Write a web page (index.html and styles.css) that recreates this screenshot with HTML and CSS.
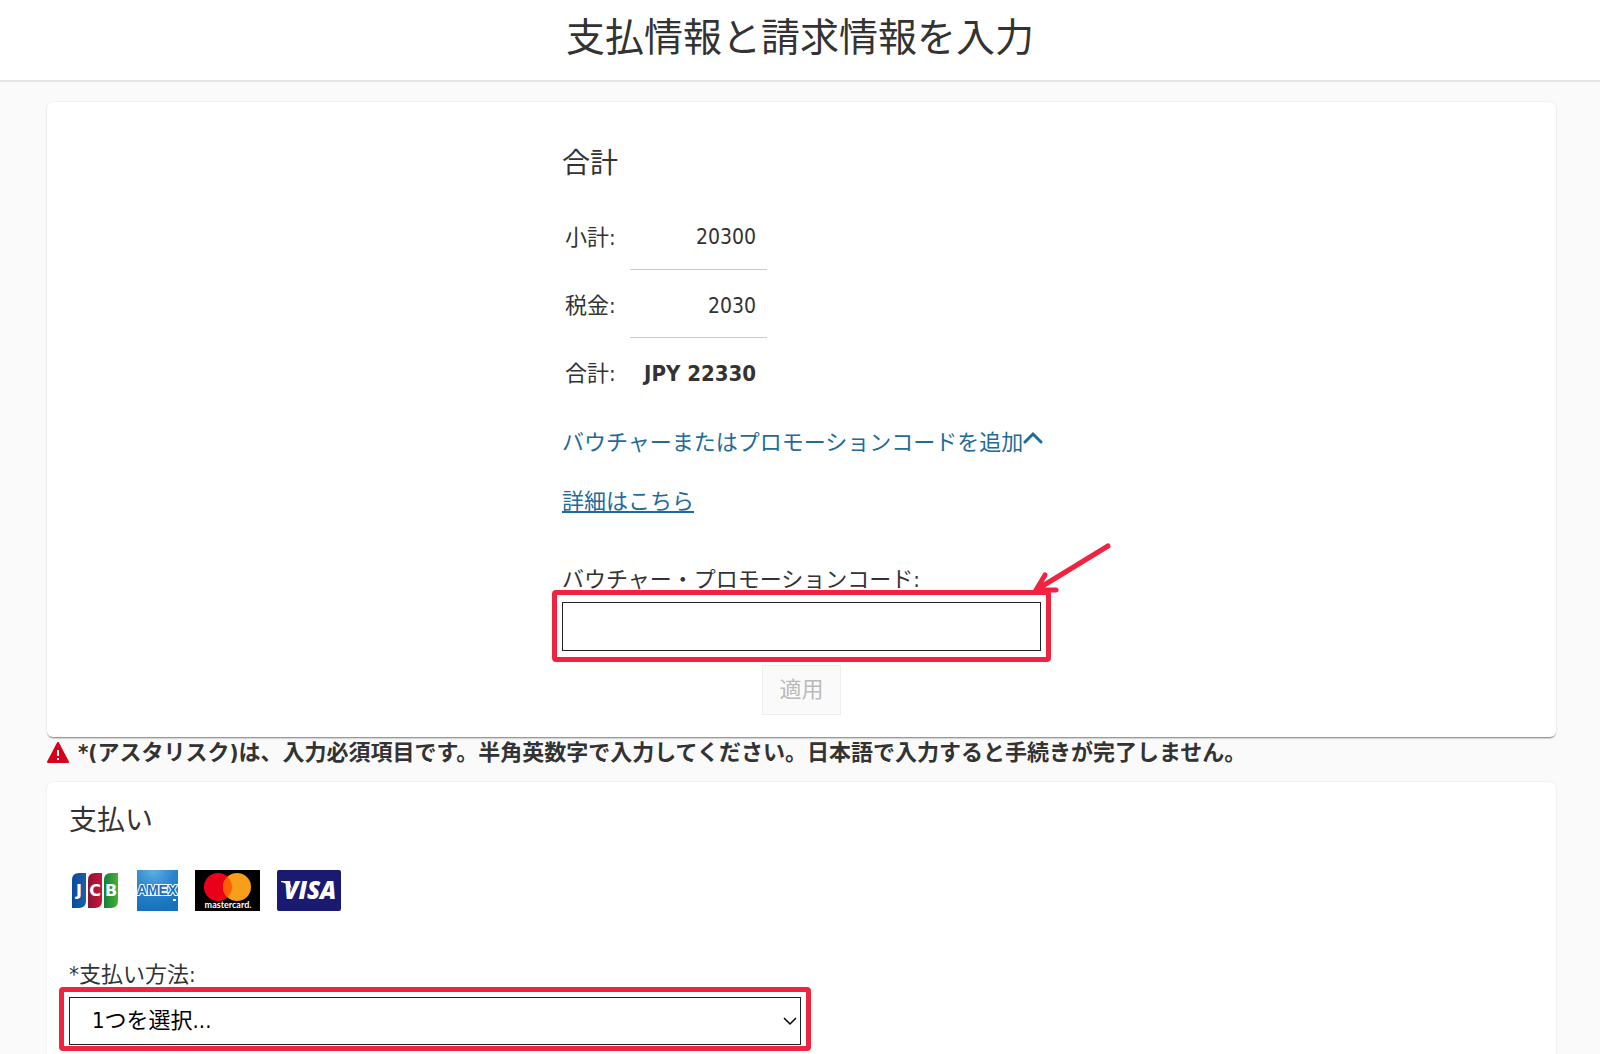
FILE: index.html
```html
<!DOCTYPE html>
<html lang="ja">
<head>
<meta charset="utf-8">
<title>支払情報と請求情報を入力</title>
<link rel="stylesheet" href="styles.css">
</head>
<body>
	<header id="page_header">
		<h1>支払情報と請求情報を入力</h1>
	</header>
	<main>
		<section class="card" id="summary">
			<div class="column">
				<h2>合計</h2>
				<table class="totals">
					<tr><th scope="row">小計:</th><td>20300</td></tr>
					<tr><th scope="row">税金:</th><td>2030</td></tr>
					<tr class="grand"><th scope="row">合計:</th><td>JPY 22330</td></tr>
				</table>
				<a class="toggle" href="#voucher">バウチャーまたはプロモーションコードを追加<svg width="20" height="13" viewBox="0 0 20 13"><path d="M2 11L10 3L18 11" fill="none" stroke="#1f6b9a" stroke-width="3" stroke-linecap="round"/></svg></a>
				<a class="more" href="#details">詳細はこちら</a>
				<label for="voucher">バウチャー・プロモーションコード:</label>
				<div class="marked">
					<input type="text" id="voucher">
					<svg class="arrow" width="80" height="54" viewBox="0 0 80 54"><path d="M76 4L4 48M13 33L4 48L24 48" fill="none" stroke="#ee2440" stroke-width="5" stroke-linecap="round" stroke-linejoin="round"/></svg>
				</div>
				<button type="button" disabled>適用</button>
			</div>
		</section>

		<p class="notice">
			<svg width="22" height="22" viewBox="0 0 22 22"><path d="M11 1L21 20H1Z" fill="#d6001c" stroke="#d6001c" stroke-width="2" stroke-linejoin="round"/><path d="M11 8V14M11 16V18" stroke="#fff" stroke-width="2"/></svg>
			<span>*(アスタリスク)は、入力必須項目です。半角英数字で入力してください。日本語で入力すると手続きが完了しません。</span>
		</p>

		<section class="card" id="payment">
			<h2>支払い</h2>
			<div class="brands">
				<svg width="49" height="41" viewBox="0 0 49 41" role="img" aria-label="JCB">
					<defs>
						<linearGradient id="jcb_b"><stop offset="0" stop-color="#0c4a9c"/><stop offset="1" stop-color="#1c5fa8"/></linearGradient>
						<linearGradient id="jcb_r"><stop offset="0" stop-color="#8c1438"/><stop offset="1" stop-color="#c8173a"/></linearGradient>
						<linearGradient id="jcb_g"><stop offset="0" stop-color="#12803a"/><stop offset="1" stop-color="#4caf32"/></linearGradient>
					</defs>
					<path d="M1 10Q1 3 8 3H15V31Q15 38 8 38H1Z" fill="url(#jcb_b)"/>
					<path d="M17 10Q17 3 24 3H31V31Q31 38 24 38H17Z" fill="url(#jcb_r)"/>
					<path d="M33 10Q33 3 40 3H47V31Q47 38 40 38H33Z" fill="url(#jcb_g)"/>
					<text class="jcb_text" x="8" y="26" text-anchor="middle">J</text>
					<text class="jcb_text" x="24" y="26" text-anchor="middle">C</text>
					<text class="jcb_text" x="40" y="26" text-anchor="middle">B</text>
				</svg>
				<svg width="41" height="41" viewBox="0 0 41 41" role="img" aria-label="American Express">
					<defs>
						<radialGradient id="amex_g" cx="0.4" cy="0" r="1"><stop offset="0" stop-color="#5fb0e2"/><stop offset="0.5" stop-color="#2b86cc"/><stop offset="1" stop-color="#1670bd"/></radialGradient>
					</defs>
					<rect width="41" height="41" fill="url(#amex_g)"/>
					<text class="amex_text" x="20" y="25" text-anchor="middle">AMEX</text>
					<rect x="36" y="29" width="3" height="2" fill="#fff"/>
				</svg>
				<svg width="65" height="41" viewBox="0 0 65 41" role="img" aria-label="Mastercard">
					<rect width="65" height="41" fill="#000"/>
					<circle cx="23" cy="17" r="14" fill="#eb001b"/>
					<circle cx="42" cy="17" r="14" fill="#f79e1b"/>
					<path d="M32.500 6.700A14 14 0 0 1 32.500 27.300A14 14 0 0 1 32.500 6.700Z" fill="#ff5f00"/>
					<text class="mc_text" x="33" y="38" text-anchor="middle">mastercard.</text>
				</svg>
				<svg width="64" height="41" viewBox="0 0 64 41" role="img" aria-label="Visa">
					<rect width="64" height="41" rx="2" fill="#1a1a72"/>
					<path d="M4 11H12L15 19Q10 13 4 12Z" fill="#fff"/>
					<text class="visa_text" x="33" y="29" text-anchor="middle">VISA</text>
				</svg>
			</div>
			<label for="method">*支払い方法:</label>
			<div class="marked method">
				<select id="method">
					<option>1つを選択...</option>
				</select>
				<svg class="caret" width="14" height="9" viewBox="0 0 14 9"><path d="M1 1L7 7L13 1" fill="none" stroke="#000" stroke-width="1.500"/></svg>
			</div>
		</section>
	</main>
</body>
</html>
```
FILE: styles.css
```css
*
{
	box-sizing: border-box;
}

body
{
	margin: 0;
	min-height: 100vh;
	display: flex;
	flex-direction: column;
	background: #fafafa;
	color: #333;
	font-family: "DejaVu Sans Condensed", "Noto Sans CJK JP", sans-serif;
	font-size: 22px;
	line-height: 32px;
}

h1, h2, p
{
	margin: 0;
	font-weight: normal;
}

#page_header
{
	padding: 9px 0 13px;
	background: #fff;
	border-bottom: 2px solid #e6e6e6;
	text-align: center;
}

h1
{
	font-size: 39px;
	line-height: 58px;
}

h2
{
	font-size: 28px;
	line-height: 40px;
}

main
{
	flex: 1;
	display: flex;
	flex-direction: column;
	padding: 20px 44px 0 47px;
}

.card
{
	background: #fff;
	border-radius: 6px;
}

#summary
{
	padding: 42px 0 22px;
	box-shadow: 0 2px 2px -1px rgba(0, 0, 0, 0.5), 0 0 2px rgba(0, 0, 0, 0.12);
}

.column
{
	display: flex;
	flex-direction: column;
	align-items: flex-start;
	width: 479px;
	margin: 0 auto;
}

.totals
{
	margin-top: 17px;
	border-collapse: collapse;
}

.totals th
{
	width: 68px;
	padding: 5px 0 0 3px;
	font-weight: normal;
	text-align: left;
}

.totals td
{
	height: 68px;
	min-width: 137px;
	padding: 5px 11px 0;
	border-bottom: 1px solid #ccc;
	font-size: 21px;
	text-align: right;
}

.totals .grand td
{
	border-bottom: 0;
	font-size: 22px;
	font-weight: bold;
}

a
{
	color: #1f6b9a;
}

.toggle
{
	margin-top: 22px;
	text-decoration: none;
	white-space: nowrap;
}

.toggle svg
{
	vertical-align: 6px;
}

.more
{
	margin-top: 27px;
	text-underline-offset: 2px;
}

label
{
	display: block;
}

.column label
{
	margin-top: 46px;
}

.marked
{
	position: relative;
	width: 100%;
}

/* red highlight round the field */
.marked::after
{
	content: "";
	position: absolute;
	inset: -12px -10px -11px;
	border: 5px solid #ee2440;
	border-radius: 4px;
	pointer-events: none;
}

.column .marked
{
	margin-top: 6px;
}

.arrow
{
	position: absolute;
	right: -71px;
	top: -60px;
}

input, select, button
{
	display: block;
	font: inherit;
	border-radius: 0;
}

input
{
	width: 100%;
	height: 49px;
	padding: 0 22px;
	border: 1px solid #222;
	background: #fff;
}

button
{
	align-self: center;
	height: 50px;
	margin-top: 14px;
	padding: 0 16px;
	border: 1px solid #eee;
	background: #fafafa;
	color: #bbb;
}

.notice
{
	display: flex;
	align-items: center;
	gap: 9px;
	margin-bottom: 13px;
	font-weight: bold;
}

#payment
{
	flex: 1;
	padding: 19px 22px 10px;
	border-radius: 6px 6px 0 0;
	box-shadow: 0 0 2px rgba(0, 0, 0, 0.12);
}

.brands
{
	display: flex;
	gap: 17px;
	margin: 29px 0 48px 2px;
}

.jcb_text
{
	font: bold 16px "DejaVu Sans", sans-serif;
	fill: #fff;
}

.amex_text
{
	font: bold 14px "Liberation Sans", sans-serif;
	fill: #1670bd;
	stroke: #fff;
	stroke-width: 2px;
	paint-order: stroke;
}

.mc_text
{
	font: bold 9px Lato, sans-serif;
	fill: #fff;
}

.visa_text
{
	font: italic 800 24px "Open Sans", sans-serif;
	fill: #fff;
}

.method
{
	width: 50%;
	max-width: 732px;
	margin-top: 6px;
}

.method::after
{
	inset: -10px -10px -6px;
}

select
{
	width: 100%;
	height: 48px;
	padding: 0 22px;
	border: 1px solid #222;
	background: #fff;
	color: #000;
	appearance: none;
}

.caret
{
	position: absolute;
	right: 4px;
	top: 20px;
	pointer-events: none;
}
```
